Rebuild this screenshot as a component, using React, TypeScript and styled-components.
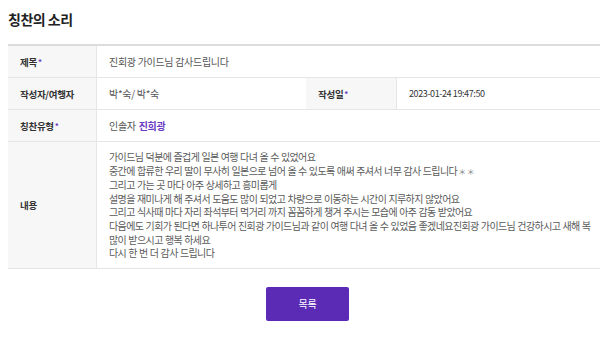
import React from "react";
import styled, { createGlobalStyle } from "styled-components";

const Global = createGlobalStyle`
  html, body { margin: 0; padding: 0; background: #fff; overflow-x: hidden; }
  body { font-family: "Noto Sans CJK KR", "Noto Sans", sans-serif; }
`;

const Page = styled.div`
  width: 599px;
  padding: 0 0 0 8px;
`;

const Title = styled.h2`
  margin: 0;
  padding-top: 9px;
  height: 44px;
  box-sizing: border-box;
  font-size: 14px;
  font-weight: 700;
  color: #222;
  letter-spacing: -0.5px;
  line-height: 20px;
`;

const Table = styled.div`
  display: grid;
  grid-template-columns: 89px 209px 91px 1fr;
  border-top: 2px solid #dcdcdc;
`;

const Label = styled.div`
  display: flex;
  align-items: center;
  padding-left: 12px;
  min-height: 31px;
  background: #f7f7f7;
  border-right: 1px solid #e6e6e6;
  border-bottom: 1px solid #e6e6e6;
  font-size: 9.5px;
  font-weight: 700;
  color: #333;
  letter-spacing: -0.3px;
`;

const Star = styled.span`
  color: #6a3ac4;
  margin-left: 1px;
  font-size: 8px;
`;

const Value = styled.div<{ $span?: boolean }>`
  grid-column: ${(p) => (p.$span ? "2 / -1" : "auto")};
  display: flex;
  align-items: center;
  padding-left: 12px;
  border-bottom: 1px solid #e6e6e6;
  font-size: 10px;
  color: #555;
  letter-spacing: -0.3px;
`;

const DateValue = styled(Value)`
  font-size: 9px;
  color: #333;
  letter-spacing: -0.4px;
`;

const Purple = styled.b`
  color: #6a3ac4;
  margin-left: 3px;
`;

const Content = styled.div`
  grid-column: 2 / -1;
  padding: 8px 12px 8px;
  border-bottom: 1px solid #e6e6e6;
  font-size: 10px;
  line-height: 13.6px;
  color: #5a5a5a;
  letter-spacing: -0.6px;
  word-spacing: 0.5px;
  white-space: nowrap;
`;

const SmallStars = styled.span`
  font-size: 8px;
  color: #888;
  letter-spacing: 0.5px;
  margin-left: 1px;
`;

const Footer = styled.div`
  display: flex;
  justify-content: center;
  padding-top: 18px;
`;

const Button = styled.button`
  width: 83px;
  height: 34px;
  border: none;
  border-radius: 2px;
  background: #5b2bb5;
  color: #fff;
  font-family: inherit;
  font-size: 10px;
  letter-spacing: -0.3px;
  cursor: pointer;
`;

const lines: React.ReactNode[] = [
  "가이드님 덕분에 즐겁게 일본 여행 다녀 올 수 있었어요",
  <>
    중간에 합류한 우리 딸이 무사히 일본으로 넘어 올 수 있도록 애써 주셔서 너무 감사 드립니다
    <SmallStars>＊＊</SmallStars>
  </>,
  "그리고 가는 곳 마다 아주 상세하고 흥미롭게",
  "설명을 재미나게 해 주셔서 도움도 많이 되었고 차량으로 이동하는 시간이 지루하지 않았어요",
  "그리고 식사때 마다 자리 좌석부터 먹거리 까지 꼼꼼하게 챙겨 주시는 모습에 아주 감동 받았어요",
  "다음에도 기회가 된다면 하나투어 진회광 가이드님과 같이 여행 다녀 올 수 있었음 좋겠네요진회광 가이드님 건강하시고 새해 복",
  "많이 받으시고 행복 하세요",
  "다시 한 번 더 감사 드립니다",
];

export default function App() {
  return (
    <Page>
      <Global />
      <Title>칭찬의 소리</Title>
      <Table>
        <Label>
          제목<Star>*</Star>
        </Label>
        <Value $span>진회광 가이드님 감사드립니다</Value>

        <Label>작성자/여행자</Label>
        <Value>박*숙/ 박*숙</Value>
        <Label>
          작성일<Star>*</Star>
        </Label>
        <DateValue>2023-01-24 19:47:50</DateValue>

        <Label>
          칭찬유형<Star>*</Star>
        </Label>
        <Value $span>
          인솔자<Purple>진희광</Purple>
        </Value>

        <Label>내용</Label>
        <Content>
          {lines.map((l, i) => (
            <div key={i}>{l}</div>
          ))}
        </Content>
      </Table>
      <Footer>
        <Button>목록</Button>
      </Footer>
    </Page>
  );
}
